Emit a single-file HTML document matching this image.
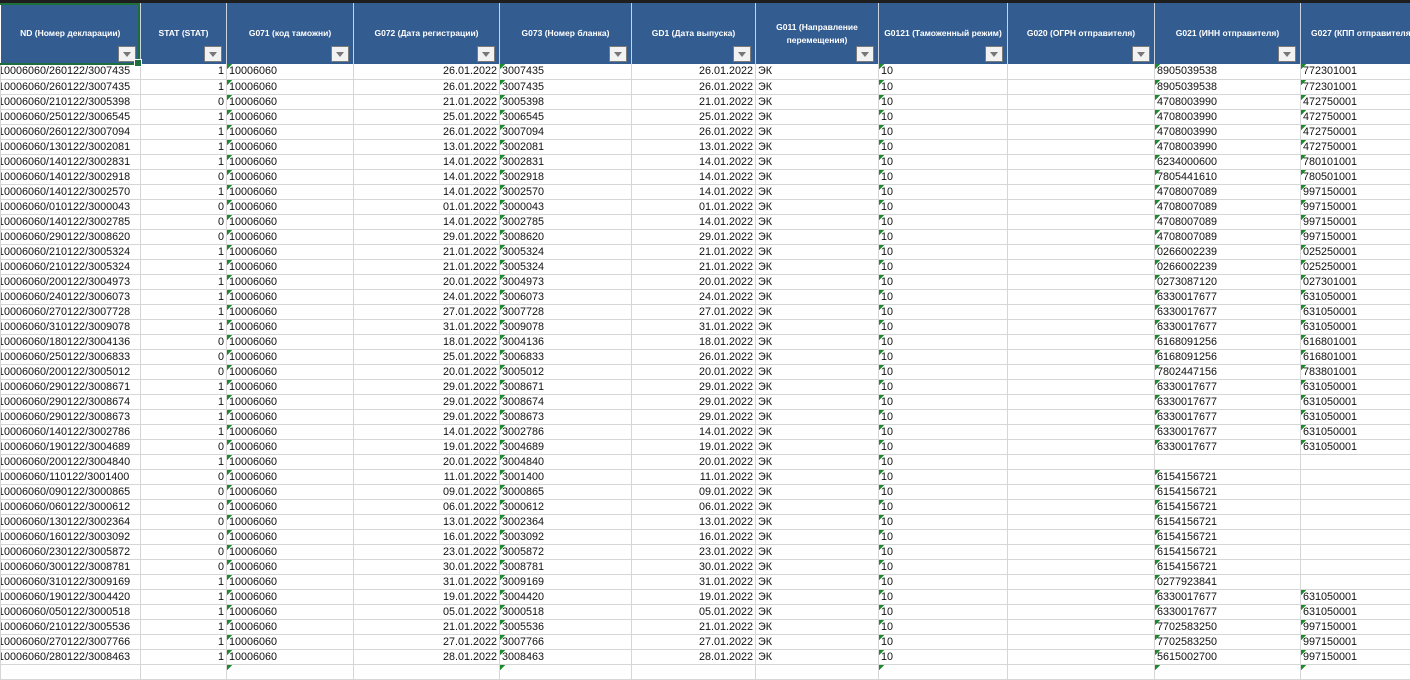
<!DOCTYPE html>
<html><head><meta charset="utf-8"><style>
*{margin:0;padding:0;box-sizing:border-box}
body{width:1410px;height:666px;overflow:hidden;background:#fff;font-family:"Liberation Sans",Arial,sans-serif;position:relative}
.top{position:absolute;left:0;top:0;width:1410px;height:3px;background:#1e1e1e}
table{position:absolute;left:0;top:3px;border-collapse:collapse;table-layout:fixed;width:1410px}
th{background:#335c91;color:#fff;font-size:8.5px;font-weight:bold;height:61px;border-left:1px solid #c9d3e0;position:relative;vertical-align:middle;padding:0 4px 0;line-height:13px}
th:first-child{border-left:none}
th .d{position:absolute;right:4px;bottom:2px;width:18px;height:16px;background:#f2f2f2;border:1px solid #7a7a7a}
th .d:after{content:"";position:absolute;left:4px;top:5px;border-left:4.5px solid transparent;border-right:4.5px solid transparent;border-top:5px solid #777}
td{height:15px;border:1px solid #d6d6d6;border-top:none;font-size:10.8px;color:#111;white-space:nowrap;overflow:hidden;padding:0 2px;line-height:14px}
td.r{text-align:right}
td.n{padding-left:0;text-indent:-3px}
.t{background:linear-gradient(135deg,#1b8a2a 3.6px,transparent 3.7px) no-repeat}
.sel{position:absolute;left:0;top:3px;width:140px;height:62px;border:2px solid #1d6f3c;border-left:none}
.sel:after{content:"";position:absolute;right:-4px;bottom:-4px;width:6px;height:6px;background:#1d6f3c;border:1px solid #fff}
</style></head><body>
<div class="top"></div>
<table>
<colgroup><col style="width:140px"><col style="width:86px"><col style="width:127px"><col style="width:146px"><col style="width:132px"><col style="width:124px"><col style="width:123px"><col style="width:129px"><col style="width:147px"><col style="width:146px"><col style="width:110px"></colgroup>
<tr>
<th>ND (Номер декларации)<span class="d"></span></th>
<th>STAT (STAT)<span class="d"></span></th>
<th>G071 (код таможни)<span class="d"></span></th>
<th>G072 (Дата регистрации)<span class="d"></span></th>
<th>G073 (Номер бланка)<span class="d"></span></th>
<th>GD1 (Дата выпуска)<span class="d"></span></th>
<th>G011 (Направление перемещения)<span class="d"></span></th>
<th>G0121 (Таможенный режим)<span class="d"></span></th>
<th>G020 (ОГРН отправителя)<span class="d"></span></th>
<th>G021 (ИНН отправителя)<span class="d"></span></th>
<th style="text-align:left;padding-left:10px;white-space:nowrap;overflow:hidden">G027 (КПП отправителя)</th>
</tr>
<tr><td class="n">10006060/260122/3007435</td><td class="r">1</td><td class="t">10006060</td><td class="r">26.01.2022</td><td class="t">3007435</td><td class="r">26.01.2022</td><td>ЭК</td><td class="t">10</td><td></td><td class="t">8905039538</td><td class="t">772301001</td></tr>
<tr><td class="n">10006060/260122/3007435</td><td class="r">1</td><td class="t">10006060</td><td class="r">26.01.2022</td><td class="t">3007435</td><td class="r">26.01.2022</td><td>ЭК</td><td class="t">10</td><td></td><td class="t">8905039538</td><td class="t">772301001</td></tr>
<tr><td class="n">10006060/210122/3005398</td><td class="r">0</td><td class="t">10006060</td><td class="r">21.01.2022</td><td class="t">3005398</td><td class="r">21.01.2022</td><td>ЭК</td><td class="t">10</td><td></td><td class="t">4708003990</td><td class="t">472750001</td></tr>
<tr><td class="n">10006060/250122/3006545</td><td class="r">1</td><td class="t">10006060</td><td class="r">25.01.2022</td><td class="t">3006545</td><td class="r">25.01.2022</td><td>ЭК</td><td class="t">10</td><td></td><td class="t">4708003990</td><td class="t">472750001</td></tr>
<tr><td class="n">10006060/260122/3007094</td><td class="r">1</td><td class="t">10006060</td><td class="r">26.01.2022</td><td class="t">3007094</td><td class="r">26.01.2022</td><td>ЭК</td><td class="t">10</td><td></td><td class="t">4708003990</td><td class="t">472750001</td></tr>
<tr><td class="n">10006060/130122/3002081</td><td class="r">1</td><td class="t">10006060</td><td class="r">13.01.2022</td><td class="t">3002081</td><td class="r">13.01.2022</td><td>ЭК</td><td class="t">10</td><td></td><td class="t">4708003990</td><td class="t">472750001</td></tr>
<tr><td class="n">10006060/140122/3002831</td><td class="r">1</td><td class="t">10006060</td><td class="r">14.01.2022</td><td class="t">3002831</td><td class="r">14.01.2022</td><td>ЭК</td><td class="t">10</td><td></td><td class="t">6234000600</td><td class="t">780101001</td></tr>
<tr><td class="n">10006060/140122/3002918</td><td class="r">0</td><td class="t">10006060</td><td class="r">14.01.2022</td><td class="t">3002918</td><td class="r">14.01.2022</td><td>ЭК</td><td class="t">10</td><td></td><td class="t">7805441610</td><td class="t">780501001</td></tr>
<tr><td class="n">10006060/140122/3002570</td><td class="r">1</td><td class="t">10006060</td><td class="r">14.01.2022</td><td class="t">3002570</td><td class="r">14.01.2022</td><td>ЭК</td><td class="t">10</td><td></td><td class="t">4708007089</td><td class="t">997150001</td></tr>
<tr><td class="n">10006060/010122/3000043</td><td class="r">0</td><td class="t">10006060</td><td class="r">01.01.2022</td><td class="t">3000043</td><td class="r">01.01.2022</td><td>ЭК</td><td class="t">10</td><td></td><td class="t">4708007089</td><td class="t">997150001</td></tr>
<tr><td class="n">10006060/140122/3002785</td><td class="r">0</td><td class="t">10006060</td><td class="r">14.01.2022</td><td class="t">3002785</td><td class="r">14.01.2022</td><td>ЭК</td><td class="t">10</td><td></td><td class="t">4708007089</td><td class="t">997150001</td></tr>
<tr><td class="n">10006060/290122/3008620</td><td class="r">0</td><td class="t">10006060</td><td class="r">29.01.2022</td><td class="t">3008620</td><td class="r">29.01.2022</td><td>ЭК</td><td class="t">10</td><td></td><td class="t">4708007089</td><td class="t">997150001</td></tr>
<tr><td class="n">10006060/210122/3005324</td><td class="r">1</td><td class="t">10006060</td><td class="r">21.01.2022</td><td class="t">3005324</td><td class="r">21.01.2022</td><td>ЭК</td><td class="t">10</td><td></td><td class="t">0266002239</td><td class="t">025250001</td></tr>
<tr><td class="n">10006060/210122/3005324</td><td class="r">1</td><td class="t">10006060</td><td class="r">21.01.2022</td><td class="t">3005324</td><td class="r">21.01.2022</td><td>ЭК</td><td class="t">10</td><td></td><td class="t">0266002239</td><td class="t">025250001</td></tr>
<tr><td class="n">10006060/200122/3004973</td><td class="r">1</td><td class="t">10006060</td><td class="r">20.01.2022</td><td class="t">3004973</td><td class="r">20.01.2022</td><td>ЭК</td><td class="t">10</td><td></td><td class="t">0273087120</td><td class="t">027301001</td></tr>
<tr><td class="n">10006060/240122/3006073</td><td class="r">1</td><td class="t">10006060</td><td class="r">24.01.2022</td><td class="t">3006073</td><td class="r">24.01.2022</td><td>ЭК</td><td class="t">10</td><td></td><td class="t">6330017677</td><td class="t">631050001</td></tr>
<tr><td class="n">10006060/270122/3007728</td><td class="r">1</td><td class="t">10006060</td><td class="r">27.01.2022</td><td class="t">3007728</td><td class="r">27.01.2022</td><td>ЭК</td><td class="t">10</td><td></td><td class="t">6330017677</td><td class="t">631050001</td></tr>
<tr><td class="n">10006060/310122/3009078</td><td class="r">1</td><td class="t">10006060</td><td class="r">31.01.2022</td><td class="t">3009078</td><td class="r">31.01.2022</td><td>ЭК</td><td class="t">10</td><td></td><td class="t">6330017677</td><td class="t">631050001</td></tr>
<tr><td class="n">10006060/180122/3004136</td><td class="r">0</td><td class="t">10006060</td><td class="r">18.01.2022</td><td class="t">3004136</td><td class="r">18.01.2022</td><td>ЭК</td><td class="t">10</td><td></td><td class="t">6168091256</td><td class="t">616801001</td></tr>
<tr><td class="n">10006060/250122/3006833</td><td class="r">0</td><td class="t">10006060</td><td class="r">25.01.2022</td><td class="t">3006833</td><td class="r">26.01.2022</td><td>ЭК</td><td class="t">10</td><td></td><td class="t">6168091256</td><td class="t">616801001</td></tr>
<tr><td class="n">10006060/200122/3005012</td><td class="r">0</td><td class="t">10006060</td><td class="r">20.01.2022</td><td class="t">3005012</td><td class="r">20.01.2022</td><td>ЭК</td><td class="t">10</td><td></td><td class="t">7802447156</td><td class="t">783801001</td></tr>
<tr><td class="n">10006060/290122/3008671</td><td class="r">1</td><td class="t">10006060</td><td class="r">29.01.2022</td><td class="t">3008671</td><td class="r">29.01.2022</td><td>ЭК</td><td class="t">10</td><td></td><td class="t">6330017677</td><td class="t">631050001</td></tr>
<tr><td class="n">10006060/290122/3008674</td><td class="r">1</td><td class="t">10006060</td><td class="r">29.01.2022</td><td class="t">3008674</td><td class="r">29.01.2022</td><td>ЭК</td><td class="t">10</td><td></td><td class="t">6330017677</td><td class="t">631050001</td></tr>
<tr><td class="n">10006060/290122/3008673</td><td class="r">1</td><td class="t">10006060</td><td class="r">29.01.2022</td><td class="t">3008673</td><td class="r">29.01.2022</td><td>ЭК</td><td class="t">10</td><td></td><td class="t">6330017677</td><td class="t">631050001</td></tr>
<tr><td class="n">10006060/140122/3002786</td><td class="r">1</td><td class="t">10006060</td><td class="r">14.01.2022</td><td class="t">3002786</td><td class="r">14.01.2022</td><td>ЭК</td><td class="t">10</td><td></td><td class="t">6330017677</td><td class="t">631050001</td></tr>
<tr><td class="n">10006060/190122/3004689</td><td class="r">0</td><td class="t">10006060</td><td class="r">19.01.2022</td><td class="t">3004689</td><td class="r">19.01.2022</td><td>ЭК</td><td class="t">10</td><td></td><td class="t">6330017677</td><td class="t">631050001</td></tr>
<tr><td class="n">10006060/200122/3004840</td><td class="r">1</td><td class="t">10006060</td><td class="r">20.01.2022</td><td class="t">3004840</td><td class="r">20.01.2022</td><td>ЭК</td><td class="t">10</td><td></td><td></td><td></td></tr>
<tr><td class="n">10006060/110122/3001400</td><td class="r">0</td><td class="t">10006060</td><td class="r">11.01.2022</td><td class="t">3001400</td><td class="r">11.01.2022</td><td>ЭК</td><td class="t">10</td><td></td><td class="t">6154156721</td><td></td></tr>
<tr><td class="n">10006060/090122/3000865</td><td class="r">0</td><td class="t">10006060</td><td class="r">09.01.2022</td><td class="t">3000865</td><td class="r">09.01.2022</td><td>ЭК</td><td class="t">10</td><td></td><td class="t">6154156721</td><td></td></tr>
<tr><td class="n">10006060/060122/3000612</td><td class="r">0</td><td class="t">10006060</td><td class="r">06.01.2022</td><td class="t">3000612</td><td class="r">06.01.2022</td><td>ЭК</td><td class="t">10</td><td></td><td class="t">6154156721</td><td></td></tr>
<tr><td class="n">10006060/130122/3002364</td><td class="r">0</td><td class="t">10006060</td><td class="r">13.01.2022</td><td class="t">3002364</td><td class="r">13.01.2022</td><td>ЭК</td><td class="t">10</td><td></td><td class="t">6154156721</td><td></td></tr>
<tr><td class="n">10006060/160122/3003092</td><td class="r">0</td><td class="t">10006060</td><td class="r">16.01.2022</td><td class="t">3003092</td><td class="r">16.01.2022</td><td>ЭК</td><td class="t">10</td><td></td><td class="t">6154156721</td><td></td></tr>
<tr><td class="n">10006060/230122/3005872</td><td class="r">0</td><td class="t">10006060</td><td class="r">23.01.2022</td><td class="t">3005872</td><td class="r">23.01.2022</td><td>ЭК</td><td class="t">10</td><td></td><td class="t">6154156721</td><td></td></tr>
<tr><td class="n">10006060/300122/3008781</td><td class="r">0</td><td class="t">10006060</td><td class="r">30.01.2022</td><td class="t">3008781</td><td class="r">30.01.2022</td><td>ЭК</td><td class="t">10</td><td></td><td class="t">6154156721</td><td></td></tr>
<tr><td class="n">10006060/310122/3009169</td><td class="r">1</td><td class="t">10006060</td><td class="r">31.01.2022</td><td class="t">3009169</td><td class="r">31.01.2022</td><td>ЭК</td><td class="t">10</td><td></td><td class="t">0277923841</td><td></td></tr>
<tr><td class="n">10006060/190122/3004420</td><td class="r">1</td><td class="t">10006060</td><td class="r">19.01.2022</td><td class="t">3004420</td><td class="r">19.01.2022</td><td>ЭК</td><td class="t">10</td><td></td><td class="t">6330017677</td><td class="t">631050001</td></tr>
<tr><td class="n">10006060/050122/3000518</td><td class="r">1</td><td class="t">10006060</td><td class="r">05.01.2022</td><td class="t">3000518</td><td class="r">05.01.2022</td><td>ЭК</td><td class="t">10</td><td></td><td class="t">6330017677</td><td class="t">631050001</td></tr>
<tr><td class="n">10006060/210122/3005536</td><td class="r">1</td><td class="t">10006060</td><td class="r">21.01.2022</td><td class="t">3005536</td><td class="r">21.01.2022</td><td>ЭК</td><td class="t">10</td><td></td><td class="t">7702583250</td><td class="t">997150001</td></tr>
<tr><td class="n">10006060/270122/3007766</td><td class="r">1</td><td class="t">10006060</td><td class="r">27.01.2022</td><td class="t">3007766</td><td class="r">27.01.2022</td><td>ЭК</td><td class="t">10</td><td></td><td class="t">7702583250</td><td class="t">997150001</td></tr>
<tr><td class="n">10006060/280122/3008463</td><td class="r">1</td><td class="t">10006060</td><td class="r">28.01.2022</td><td class="t">3008463</td><td class="r">28.01.2022</td><td>ЭК</td><td class="t">10</td><td></td><td class="t">5615002700</td><td class="t">997150001</td></tr>
<tr><td class="n"></td><td class="r"></td><td class="t"></td><td></td><td class="t"></td><td></td><td></td><td class="t"></td><td></td><td class="t"></td><td class="t"></td></tr>
</table>
<div class="sel"></div>
</body></html>
